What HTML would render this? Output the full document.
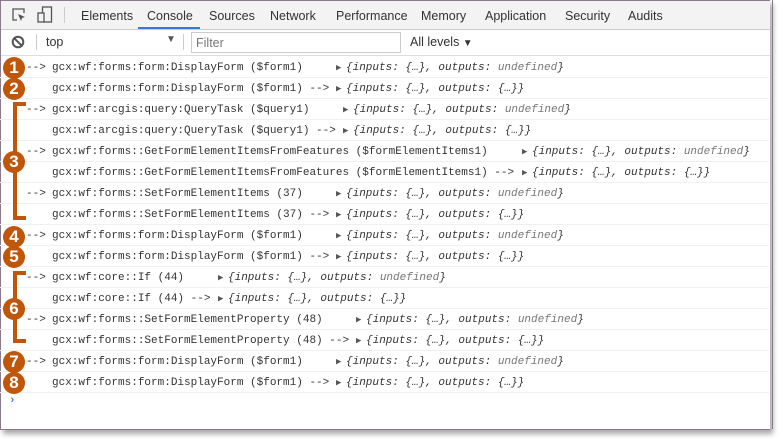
<!DOCTYPE html>
<html><head><style>
body{margin:0;width:783px;height:439px;background:#fff;position:relative;overflow:hidden;font-family:"Liberation Sans",sans-serif}
.panel{position:absolute;left:0;top:0;width:769px;height:428px;border:1px solid #8a7a8c;border-right:none;background:#fff;box-shadow:3px 4px 5px rgba(0,0,0,.35)}
.edge{position:absolute;left:767px;top:0;width:5px;height:429px;border-right:1px solid #8a7a8c}
.tb{position:absolute;left:0;top:0;width:769px;height:28px;background:#f3f3f3;border-bottom:1px solid #ccc}
.tab{position:absolute;top:8px;font-size:12.5px;color:#333}
.fb{position:absolute;left:0;top:29px;width:769px;height:25px;border-bottom:1px solid #ddd;background:#fff}
.row{position:absolute;left:0;width:769px;height:20px;border-bottom:1px solid #f0f0f0;font:11px "Liberation Mono",monospace;color:#333;line-height:22px}
.row span{position:absolute;white-space:pre}
.o{font-style:italic;color:#333}
.o i{color:#777}
.b{position:absolute;left:3px;width:22px;height:22px;border-radius:50%;background:#c0560a;color:#fff;font:bold 17px "Liberation Sans",sans-serif;text-align:center;line-height:22px}
.br{position:absolute;left:13px;width:9px;border:4px solid #c0560a;border-right:none}
</style></head><body>
<div class="panel">
<div class="tb">
<svg style="position:absolute;left:10px;top:6px" width="16" height="16" viewBox="0 0 16 16"><path d="M6 13H2V2h11v4" fill="none" stroke="#555" stroke-width="1.3"/><path d="M7 7l7 3-3 1-1 3z" fill="#555"/></svg>
<svg style="position:absolute;left:36px;top:5px" width="16" height="18" viewBox="0 0 16 18"><rect x="5.5" y="1" width="9" height="15" fill="none" stroke="#555" stroke-width="1.3"/><rect x="1" y="7" width="6" height="9" fill="#f3f3f3" stroke="#555" stroke-width="1.3"/></svg>
<div style="position:absolute;left:63px;top:6px;width:1px;height:16px;background:#ccc"></div>
<span class="tab" style="left:80px">Elements</span>
<span class="tab" style="left:146px">Console</span>
<div style="position:absolute;left:137px;top:26px;width:62px;height:2px;background:#3879d9"></div>
<span class="tab" style="left:208px">Sources</span>
<span class="tab" style="left:269px">Network</span>
<span class="tab" style="left:335px">Performance</span>
<span class="tab" style="left:420px">Memory</span>
<span class="tab" style="left:484px">Application</span>
<span class="tab" style="left:564px">Security</span>
<span class="tab" style="left:627px">Audits</span>
</div>
<div class="fb">
<svg style="position:absolute;left:10px;top:5px" width="14" height="14" viewBox="0 0 14 14"><circle cx="7" cy="7" r="5.3" fill="none" stroke="#555" stroke-width="2"/><path d="M3.3 3.3l7.4 7.4" stroke="#555" stroke-width="2"/></svg>
<div style="position:absolute;left:35px;top:4px;width:1px;height:16px;background:#ccc"></div>
<span style="position:absolute;left:45px;top:5px;font-size:12.5px;color:#333">top</span>
<span style="position:absolute;left:165px;top:4px;font-size:10px;color:#555">▼</span>
<div style="position:absolute;left:182px;top:4px;width:1px;height:16px;background:#ccc"></div>
<div style="position:absolute;left:190px;top:2px;width:208px;height:19px;border:1px solid #ccc"></div>
<span style="position:absolute;left:195px;top:6px;font-size:12.5px;color:#777">Filter</span>
<span style="position:absolute;left:409px;top:5px;font-size:12.5px;color:#333">All levels <span style="font-size:10px">▼</span></span>
</div>
</div>
<div class="edge"></div>
<div id="rows"></div>
<div class="br" style="top:102px;height:110px"></div>
<div class="br" style="top:271px;height:64px"></div>
<div class="b" style="top:57px">1</div>
<div class="b" style="top:78px">2</div>
<div class="b" style="top:151px">3</div>
<div class="b" style="top:226px">4</div>
<div class="b" style="top:246px">5</div>
<div class="b" style="top:298px">6</div>
<div class="b" style="top:351px">7</div>
<div class="b" style="top:372px">8</div>
<span style="position:absolute;left:9px;top:395px;color:#3b78e7;font:bold 11px 'Liberation Mono',monospace">›</span>
<script>
var R=[
["-->","gcx:wf:forms:form:DisplayForm ($form1)",336,0],
["","gcx:wf:forms:form:DisplayForm ($form1) -->",336,1],
["-->","gcx:wf:arcgis:query:QueryTask ($query1)",343,0],
["","gcx:wf:arcgis:query:QueryTask ($query1) -->",343,1],
["-->","gcx:wf:forms::GetFormElementItemsFromFeatures ($formElementItems1)",522,0],
["","gcx:wf:forms::GetFormElementItemsFromFeatures ($formElementItems1) -->",522,1],
["-->","gcx:wf:forms::SetFormElementItems (37)",336,0],
["","gcx:wf:forms::SetFormElementItems (37) -->",336,1],
["-->","gcx:wf:forms:form:DisplayForm ($form1)",336,0],
["","gcx:wf:forms:form:DisplayForm ($form1) -->",336,1],
["-->","gcx:wf:core::If (44)",218,0],
["","gcx:wf:core::If (44) -->",218,1],
["-->","gcx:wf:forms::SetFormElementProperty (48)",356,0],
["","gcx:wf:forms::SetFormElementProperty (48) -->",356,1],
["-->","gcx:wf:forms:form:DisplayForm ($form1)",336,0],
["","gcx:wf:forms:form:DisplayForm ($form1) -->",336,1]];
var h="";
R.forEach(function(r,i){var t=57+21*i;
h+='<div class="row" style="top:'+t+'px"><span style="left:26px">'+r[0]+'</span><span style="left:52px">'+r[1]+'</span><span style="left:'+r[2]+'px;font-size:9px;color:#555">▶</span><span class="o" style="left:'+(r[2]+10)+'px">{inputs: {…}, outputs: '+(r[3]?'{…}}':'<i>undefined</i>}')+'</span></div>';});
document.getElementById("rows").innerHTML=h;
</script>
</body></html>
